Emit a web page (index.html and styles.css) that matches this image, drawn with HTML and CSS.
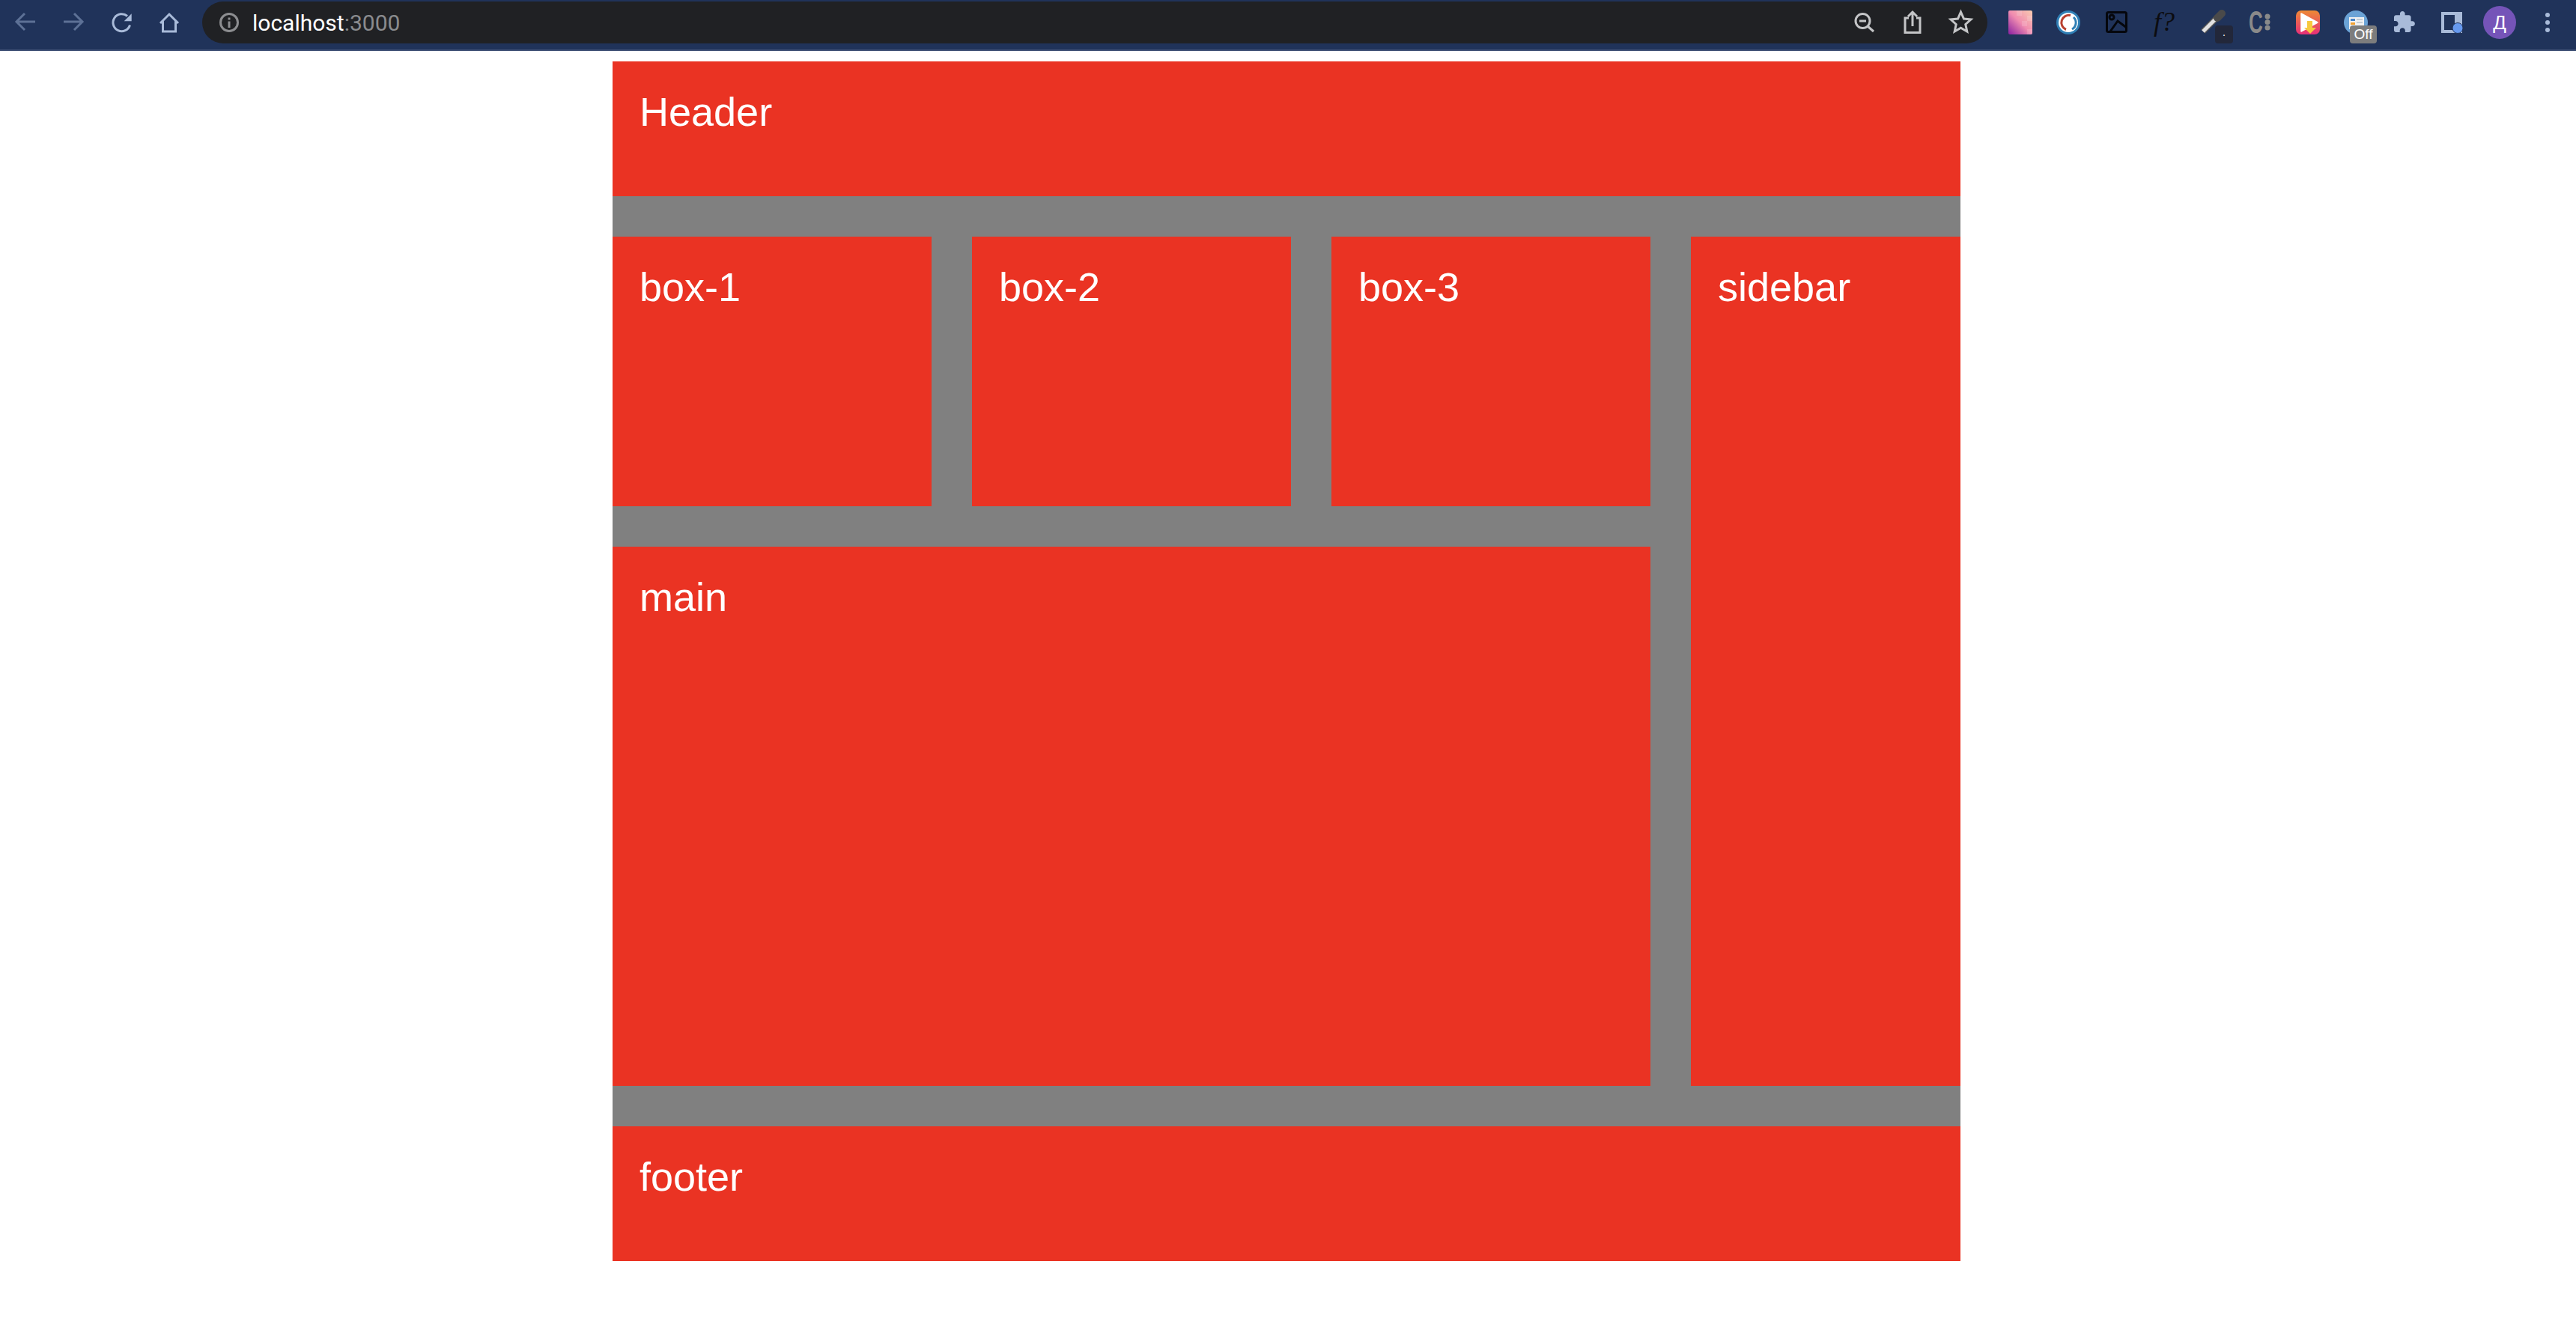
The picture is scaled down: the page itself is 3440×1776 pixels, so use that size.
FILE: index.html
```html
<!DOCTYPE html>
<html lang="en">
<head>
    <meta charset="UTF-8">
    <title>localhost:3000</title>
    <link rel="stylesheet" href="styles.css">
</head>
<body>
    <header class="toolbar">
        <div class="nav-buttons">
            <span class="nav-btn">
                <svg class="icon" viewBox="0 0 64 66"><path class="stroke-dim" d="M45 29H20M31 18 20 29l11 11"/></svg>
            </span>
            <span class="nav-btn">
                <svg class="icon" viewBox="0 0 64 66"><path class="stroke-dim" d="M19 29h25M33 18l11 11-11 11"/></svg>
            </span>
            <span class="nav-btn">
                <svg class="icon" viewBox="0 0 64 66"><path class="stroke-light" d="M43.500 33.500A11.500 11.500 0 1 1 40 21.500"/><path class="fill-light" d="M45.700 18.300v10h-10z"/></svg>
            </span>
            <span class="nav-btn">
                <svg class="icon" viewBox="0 0 64 66"><path class="stroke-light" d="M20 31 32 19l12 12M23.500 28v14h17V28"/></svg>
            </span>
        </div>

        <div class="address-bar">
            <svg class="info-icon" viewBox="0 0 26 26"><circle class="stroke-grey" cx="13" cy="13" r="11.500"/><path class="stroke-grey" d="M13 11.500V20M13 6.500v3"/></svg>
            <span class="url">localhost<span class="url-port">:3000</span></span>
            <div class="bar-actions">
                <svg class="bar-icon" viewBox="0 0 64 56"><circle class="stroke-pale" cx="29.500" cy="26" r="9.500"/><path class="stroke-pale" d="M25 26h9M36 33l8 7"/></svg>
                <svg class="bar-icon" viewBox="0 0 64 56"><path class="stroke-pale" d="M27 22h-5v19.500h20V22h-5M32 33V15M26 20l6-6 6 6"/></svg>
                <svg class="bar-icon" viewBox="0 0 64 56"><path class="stroke-pale" d="m32.500 14 4 9 9.500 1-7.200 6.500 2 9.500-8.300-4.800-8.300 4.800 2-9.500L19 24l9.500-1z"/></svg>
            </div>
        </div>

        <div class="extensions">
            <span class="ext">
                <svg class="icon" viewBox="0 0 64 66">
                    <defs>
                        <linearGradient id="mosaic" x1="0" y1="1" x2="1" y2="0">
                            <stop offset="0" stop-color="#8a1fa0"/>
                            <stop offset="0.5" stop-color="#f08cb0"/>
                            <stop offset="1" stop-color="#f9cdb0"/>
                        </linearGradient>
                    </defs>
                    <rect x="16" y="14" width="32" height="32" rx="2" fill="url(#mosaic)"/>
                    <path d="M27 14h7v7h-7zM41 21h7v7h-7zM34 28h7v7h-7zM41 39h7v7h-7z" fill="#fff" opacity="0.14"/>
                </svg>
            </span>
            <span class="ext">
                <svg class="icon" viewBox="0 0 64 66">
                    <circle cx="32" cy="30" r="16" fill="#2f7fb5"/>
                    <circle cx="32" cy="30" r="13" fill="#fff"/>
                    <path d="M35 20.500A10 10 0 0 0 29 39.500" fill="none" stroke="#b8402f" stroke-width="3"/>
                    <path d="M37 39A10 10 0 0 0 39 23" fill="none" stroke="#2f7fb5" stroke-width="3"/>
                </svg>
            </span>
            <span class="ext">
                <svg class="icon" viewBox="0 0 64 66">
                    <rect x="19.500" y="16.500" width="26" height="26" rx="2" class="stroke-black"/>
                    <circle cx="26" cy="23" r="3" class="stroke-black"/>
                    <path class="stroke-black" d="m24 42 10-14 12 9"/>
                </svg>
            </span>
            <span class="ext"><span class="ext-formula">f?</span></span>
            <span class="ext">
                <svg class="icon" viewBox="0 0 64 66">
                    <path d="m20 42 19-19" stroke="#555" stroke-width="8" fill="none"/>
                    <path d="m20 42 19-19" stroke="#e2e2e2" stroke-width="5" fill="none"/>
                    <path d="m39 24 6-6" stroke="#4a4a4a" stroke-width="10" stroke-linecap="round" fill="none"/>
                </svg>
                <span class="badge badge-dark">.</span>
            </span>
            <span class="ext">
                <svg class="icon" viewBox="0 0 64 66">
                    <text class="ext-c" transform="translate(17 44) scale(.62 1)">C</text>
                    <circle class="fill-grey" cx="42" cy="22" r="3.500"/>
                    <circle class="fill-grey" cx="42" cy="29.500" r="3.500"/>
                    <circle class="fill-grey" cx="42" cy="37" r="3.500"/>
                </svg>
            </span>
            <span class="ext">
                <svg class="icon" viewBox="0 0 64 66">
                    <defs>
                        <linearGradient id="player" x1="0" y1="0" x2="0" y2="1">
                            <stop offset="0" stop-color="#ee8a35"/>
                            <stop offset="1" stop-color="#e62f78"/>
                        </linearGradient>
                    </defs>
                    <rect x="16" y="14" width="32" height="32" rx="7" fill="url(#player)"/>
                    <path d="M23 18 45 30 23 42z" fill="#fff" stroke="#fff" stroke-width="1.500" stroke-linejoin="round"/>
                    <path d="M31 28h7v9h5l-8 8-8-8h4z" fill="#f7c93e"/>
                </svg>
            </span>
            <span class="ext">
                <svg class="icon" viewBox="0 0 64 66">
                    <circle cx="32" cy="30" r="16" fill="#6ba3d6"/>
                    <rect x="23" y="23" width="20" height="16" fill="#f2f2f2"/>
                    <path d="M25 25h6v3h-6z" fill="#4a86c8"/>
                    <path d="M25 30h6v3h-6z" fill="#f0a030"/>
                    <path d="M33 26h8M33 30h8" stroke="#9ab" stroke-width="1"/>
                </svg>
                <span class="badge badge-off">Off</span>
            </span>
            <span class="ext">
                <svg class="icon" viewBox="0 0 64 66"><path class="fill-light" transform="translate(16.300 13.700) scale(1.330)" d="M20.500 11H19V7c0-1.100-.9-2-2-2h-4V3.500C13 2.120 11.880 1 10.500 1S8 2.120 8 3.500V5H4c-1.100 0-1.990.9-1.990 2v3.800H3.500c1.490 0 2.700 1.210 2.700 2.700s-1.210 2.700-2.700 2.700H2V20c0 1.100.9 2 2 2h3.800v-1.500c0-1.490 1.210-2.700 2.700-2.700 1.490 0 2.700 1.210 2.700 2.700V22H17c1.100 0 2-.9 2-2v-4h1.500c1.380 0 2.500-1.120 2.500-2.500S21.880 11 20.500 11z"/></svg>
            </span>
            <span class="ext">
                <svg class="icon" viewBox="0 0 64 66">
                    <path class="fill-light" d="M18 16h28v28H18zM22 20v20h14V20z" fill-rule="evenodd"/>
                    <circle cx="40" cy="37.500" r="7" fill="#679af0" stroke="#20335a" stroke-width="1"/>
                </svg>
            </span>
            <span class="ext"><span class="avatar">Д</span></span>
            <span class="ext">
                <svg class="icon" viewBox="0 0 64 66">
                    <circle class="fill-light" cx="32" cy="20" r="3"/>
                    <circle class="fill-light" cx="32" cy="30" r="3"/>
                    <circle class="fill-light" cx="32" cy="40" r="3"/>
                </svg>
            </span>
        </div>
    </header>

    <main class="grid">
        <div class="cell cell-header">Header</div>
        <div class="cell">box-1</div>
        <div class="cell">box-2</div>
        <div class="cell">box-3</div>
        <div class="cell cell-sidebar">sidebar</div>
        <div class="cell cell-main">main</div>
        <div class="cell cell-footer">footer</div>
    </main>
</body>
</html>
```
FILE: styles.css
```css
* {
    margin: 0;
    padding: 0;
    box-sizing: border-box;
}

body {
    font-family: "Liberation Sans", Arial, sans-serif;
    background: #fff;
    min-height: 100vh;
}

/* browser chrome */
.toolbar {
    display: flex;
    height: 68px;
    padding: 2px 6px 8px 1.5px;
    background: #20335a;
    border-bottom: 2px solid #3d4f74;
}

.nav-buttons {
    display: flex;
    flex-shrink: 0;
    margin-top: -2px;
    margin-right: 12.5px;
}

.nav-btn {
    width: 64px;
    height: 66px;
}

.icon {
    display: block;
    width: 100%;
    height: 66px;
}

.address-bar {
    flex: 1;
    display: flex;
    align-items: center;
    height: 56px;
    margin-right: 12px;
    padding-left: 23px;
    background: #202124;
    border-radius: 28px;
}

.info-icon {
    width: 26px;
    height: 26px;
    margin-right: 18px;
}

.url {
    font-family: Roboto, sans-serif;
    font-size: 30px;
    color: #fff;
}

.url-port {
    color: #8a8b8e;
}

.bar-actions {
    display: flex;
    margin-left: auto;
    margin-right: 4px;
}

.bar-icon {
    width: 64px;
    height: 56px;
}

.extensions {
    display: flex;
    flex-shrink: 0;
    margin-top: -2px;
}

.ext {
    position: relative;
    display: flex;
    align-items: center;
    justify-content: center;
    width: 64px;
    height: 66px;
}

.ext-formula {
    margin-top: -8px;
    font-family: "Liberation Serif", serif;
    font-style: italic;
    font-size: 36px;
    color: #0c0c10;
}

.ext-c {
    font-family: "Liberation Sans", sans-serif;
    font-weight: bold;
    font-size: 42px;
    fill: #8a8a8a;
}

.avatar {
    display: flex;
    align-items: center;
    justify-content: center;
    width: 44px;
    height: 44px;
    margin-top: -6px;
    border-radius: 50%;
    background: #7554b8;
    color: #fff;
    font-size: 26px;
}

.badge {
    position: absolute;
    top: 34px;
    height: 24px;
    border-radius: 4px;
    color: #fff;
    text-align: center;
}

.badge-dark {
    left: 36px;
    width: 24px;
    background: #22273a;
    font-size: 14px;
    line-height: 18px;
}

.badge-off {
    left: 24px;
    width: 36px;
    background: #7d7d7d;
    font-size: 19px;
    line-height: 24px;
}

.stroke-dim,
.stroke-light,
.stroke-grey,
.stroke-pale,
.stroke-black {
    fill: none;
    stroke-width: 3;
}

.stroke-dim { stroke: #5d7196; }
.stroke-light { stroke: #a9bbd9; }
.stroke-grey { stroke: #8c8d90; }
.stroke-pale { stroke: #c4c5c7; }
.stroke-black { stroke: #05070d; }

.fill-light { fill: #a9bbd9; }
.fill-grey { fill: #8a8a8a; }

/* grid demo */
.grid {
    display: grid;
    grid-template-columns: 426px 426px 426px 360px;
    grid-template-rows: 180px 360px 720px 180px;
    gap: 54px;
    width: 1800px;
    margin: 14px 0 0 818px;
    background: #808080;
}

.cell {
    padding: 36px;
    background: #ea3323;
    color: #fff;
    font-size: 54px;
}

.cell-header,
.cell-footer {
    grid-column: 1 / -1;
}

.cell-main {
    grid-column: 1 / 4;
}

.cell-sidebar {
    grid-column: 4;
    grid-row: 2 / 4;
}
```
